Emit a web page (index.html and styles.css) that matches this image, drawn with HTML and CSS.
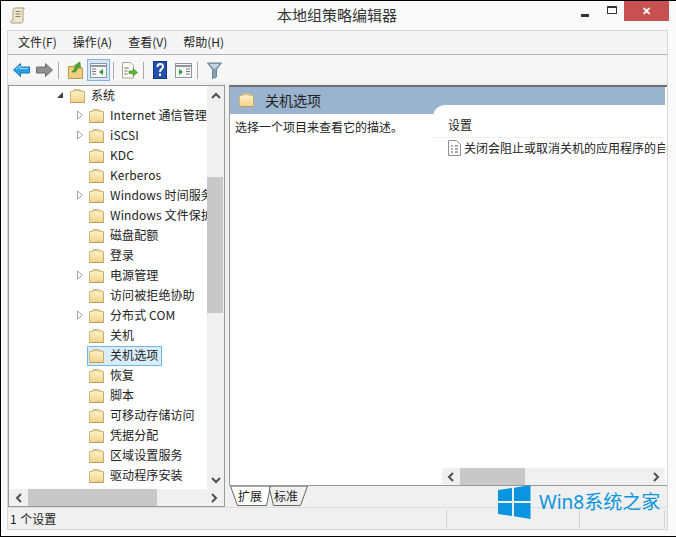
FILE: index.html
```html
<!DOCTYPE html>
<html lang="zh-CN">
<head>
<meta charset="utf-8">
<title>本地组策略编辑器</title>
<link rel="stylesheet" href="styles.css">
</head>
<body>
<svg class="defs" width="0" height="0" aria-hidden="true">
  <defs>
    <linearGradient id="fg" x1="0" y1="0" x2="0" y2="1"><stop offset="0" stop-color="#fff5cc"/><stop offset="1" stop-color="#f0d28a"/></linearGradient>
    <symbol id="folder" viewBox="0 0 15 15">
      <path d="M4 1.500h6l1 1.500h2.500v1h-9.500z" fill="#e8e2cc" stroke="#cbbd95"/>
      <path d="M.5 3.500h3.500l1-1.500 1 0.500 7.500 1 1 0.500v10.500H.5z" fill="url(#fg)" stroke="#d3b875"/>
      <path d="M.5 14.500h14" stroke="#b99d5c"/>
      <path d="M14.500 3.500v11" stroke="#c6ab68"/>
    </symbol>
    <symbol id="closed" viewBox="0 0 8 10"><path d="M1.500 1l5 4-5 4z" fill="#fff" stroke="#a6a6a6"/></symbol>
  </defs>
</svg>
<div class="window">
  <header class="titlebar">
    <svg class="appicon" width="16" height="17" viewBox="0 0 16 17"><path d="M3 3.500C3 1.500 5 1 6 1h8.500c-1 1-1.500 2-1.500 3v9c0 2-1 3-3 3H2c-1 0-1.500-1-1.500-1.500L3 13z" fill="#efe8cf" stroke="#a89a78"/><path d="M5.500 4.500h5M5.500 7h5M5.500 9.500h5" stroke="#8a8068"/></svg>
    <h1 class="title">本地组策略编辑器</h1>
    <div class="winbtns">
      <span class="wbtn"><i class="min"></i></span>
      <span class="wbtn"><i class="max"></i></span>
      <span class="wclose">✕</span>
    </div>
  </header>
  <div class="frame">
    <nav class="menu"><span>文件(F)</span><span>操作(A)</span><span>查看(V)</span><span>帮助(H)</span></nav>
    <div class="toolbar">
      <svg class="tool-first" width="17" height="14" viewBox="0 0 17 14"><path d="M.5 7L7.500.5v3.500h9v6h-9v3.500z" fill="#2b9ee6" stroke="#1b76b8"/><path d="M3 6.500L7 3v2.500h8" stroke="#9fdcff" fill="none"/></svg>
      <svg class="tool-fwd" width="17" height="14" viewBox="0 0 17 14"><path d="M16.500 7L9.500.5v3.500h-9v6h9v3.500z" fill="#8f8f8f" stroke="#6c6c6c"/></svg>
      <i class="sep sep-a"></i>
      <svg class="tool-up" width="15" height="18" viewBox="0 0 15 18"><path d="M.5 5.500h5l1 1.500h8v10.500H.5z" fill="#edcf80" stroke="#b99a50"/><path d="M4 11l4-5-2-1 6-4 .5 6-2-1-3 5z" fill="#52a82e" stroke="#35801c" stroke-width=".6"/></svg>
      <span class="tool-on"><svg width="17" height="15" viewBox="0 0 17 15"><rect x=".5" y=".5" width="16" height="14" fill="#f7f7f7" stroke="#8f989f"/><path d="M.5 3h16" stroke="#8f989f" stroke-width="2"/><path d="M2 6h4M2 8.500h4M2 11h4" stroke="#778"/><path d="M13 6v6l-4-3z" fill="#2a9a3a"/></svg></span>
      <i class="sep sep-b"></i>
      <svg class="tool-exp" width="17" height="17" viewBox="0 0 17 17"><path d="M1.500.5h8l3 3v12.500h-11z" fill="#fbfbf2" stroke="#a8a898"/><path d="M3.500 6h4M3.500 9h3M3.500 12h3" stroke="#666"/><path d="M8 9h4V6.500L16.500 10.500 12 14v-2.500H8z" fill="#59b534" stroke="#3c8e22" stroke-width=".6"/></svg>
      <i class="sep sep-a"></i>
      <svg class="tool-help" width="14" height="18" viewBox="0 0 14 18"><rect x=".5" y=".5" width="13" height="17" fill="#2450b0" stroke="#16327a"/><path d="M4.500 6c0-4 5.500-4 5.500-.5 0 2.500-3 2.500-3 5.500" fill="none" stroke="#fff" stroke-width="2"/><rect x="6" y="12.500" width="2" height="2.500" fill="#fff"/></svg>
      <svg class="tool-view" width="17" height="15" viewBox="0 0 17 15"><rect x=".5" y=".5" width="16" height="14" fill="#f7f7f7" stroke="#8f989f"/><path d="M.5 3h16" stroke="#8f989f" stroke-width="2"/><path d="M11 6h4M11 8.500h4M11 11h4" stroke="#778"/><path d="M4 6v6l4-3z" fill="#2a9a3a"/></svg>
      <i class="sep sep-a"></i>
      <svg class="tool-filter" width="15" height="17" viewBox="0 0 15 17"><path d="M.5 1h14L9.500 7.500v7.500l-4 1.500V7.500z" fill="#86a0b2" stroke="#68859a"/><path d="M2.500 2h10L8.500 6.500h-2z" fill="#c4d5e0"/></svg>
    </div>
    <main class="main">
      <section class="treepane">
        <div class="tree-row-wrap">
          <ul class="tree">
            <li class="node top"><svg class="arrow" width="8" height="10" viewBox="0 0 8 10"><path d="M7 2v6H1z" fill="#404040"/></svg><svg class="fold" width="15" height="15"><use href="#folder"/></svg><span>系统</span></li>
            <li class="node"><svg class="arrow" width="8" height="10"><use href="#closed"/></svg><svg class="fold" width="15" height="15"><use href="#folder"/></svg><span>Internet 通信管理</span></li>
            <li class="node"><svg class="arrow" width="8" height="10"><use href="#closed"/></svg><svg class="fold" width="15" height="15"><use href="#folder"/></svg><span>iSCSI</span></li>
            <li class="node leaf"><svg class="fold" width="15" height="15"><use href="#folder"/></svg><span>KDC</span></li>
            <li class="node leaf"><svg class="fold" width="15" height="15"><use href="#folder"/></svg><span>Kerberos</span></li>
            <li class="node"><svg class="arrow" width="8" height="10"><use href="#closed"/></svg><svg class="fold" width="15" height="15"><use href="#folder"/></svg><span>Windows 时间服务</span></li>
            <li class="node leaf"><svg class="fold" width="15" height="15"><use href="#folder"/></svg><span>Windows 文件保护</span></li>
            <li class="node leaf"><svg class="fold" width="15" height="15"><use href="#folder"/></svg><span>磁盘配额</span></li>
            <li class="node leaf"><svg class="fold" width="15" height="15"><use href="#folder"/></svg><span>登录</span></li>
            <li class="node"><svg class="arrow" width="8" height="10"><use href="#closed"/></svg><svg class="fold" width="15" height="15"><use href="#folder"/></svg><span>电源管理</span></li>
            <li class="node leaf"><svg class="fold" width="15" height="15"><use href="#folder"/></svg><span>访问被拒绝协助</span></li>
            <li class="node"><svg class="arrow" width="8" height="10"><use href="#closed"/></svg><svg class="fold" width="15" height="15"><use href="#folder"/></svg><span>分布式 COM</span></li>
            <li class="node leaf"><svg class="fold" width="15" height="15"><use href="#folder"/></svg><span>关机</span></li>
            <li class="node leaf sel"><div class="selbox"><svg class="fold" width="15" height="15"><use href="#folder"/></svg><span>关机选项</span></div></li>
            <li class="node leaf"><svg class="fold" width="15" height="15"><use href="#folder"/></svg><span>恢复</span></li>
            <li class="node leaf"><svg class="fold" width="15" height="15"><use href="#folder"/></svg><span>脚本</span></li>
            <li class="node leaf"><svg class="fold" width="15" height="15"><use href="#folder"/></svg><span>可移动存储访问</span></li>
            <li class="node leaf"><svg class="fold" width="15" height="15"><use href="#folder"/></svg><span>凭据分配</span></li>
            <li class="node leaf"><svg class="fold" width="15" height="15"><use href="#folder"/></svg><span>区域设置服务</span></li>
            <li class="node leaf"><svg class="fold" width="15" height="15"><use href="#folder"/></svg><span>驱动程序安装</span></li>
          </ul>
          <div class="vbar">
            <svg class="chev" width="10" height="7" viewBox="0 0 10 7"><path d="M1 6l4-4 4 4" fill="none" stroke="#505050" stroke-width="2"/></svg>
            <div class="vtrack"><div class="vthumb"></div></div>
            <svg class="chev" width="10" height="7" viewBox="0 0 10 7"><path d="M1 1l4 4 4-4" fill="none" stroke="#505050" stroke-width="2"/></svg>
          </div>
        </div>
        <div class="hbar">
          <svg class="chev" width="7" height="10" viewBox="0 0 7 10"><path d="M6 1L2 5l4 4" fill="none" stroke="#505050" stroke-width="2"/></svg>
          <div class="htrack"><div class="hthumb tree-thumb"></div></div>
          <svg class="chev" width="7" height="10" viewBox="0 0 7 10"><path d="M1 1l4 4-4 4" fill="none" stroke="#505050" stroke-width="2"/></svg>
        </div>
      </section>
      <section class="detail">
        <div class="detail-box">
          <div class="desc-col">
            <div class="banner"><svg width="15" height="15"><use href="#folder"/></svg><h2>关机选项</h2></div>
            <p class="desc">选择一个项目来查看它的描述。</p>
          </div>
          <div class="list-col">
            <div class="list-panel">
              <div class="list-head">设置</div>
              <div class="list-body">
                <div class="list-item"><svg width="13" height="16" viewBox="0 0 13 16"><path d="M.5.500h8l4 4v11h-12z" fill="#fff" stroke="#8f8f8f"/><path d="M3 6h2M7 6h3M3 9h2M7 9h3M3 12h2M7 12h3" stroke="#555"/></svg><span>关闭会阻止或取消关机的应用程序的自动终止</span></div>
              </div>
              <div class="hbar list-hbar">
                <svg class="chev" width="7" height="10" viewBox="0 0 7 10"><path d="M6 1L2 5l4 4" fill="none" stroke="#505050" stroke-width="2"/></svg>
                <div class="htrack"><div class="hthumb list-thumb"></div></div>
                <svg class="chev" width="7" height="10" viewBox="0 0 7 10"><path d="M1 1l4 4-4 4" fill="none" stroke="#505050" stroke-width="2"/></svg>
              </div>
            </div>
          </div>
        </div>
        <div class="tabs">
          <svg class="tabshape" width="78" height="21" viewBox="0 0 78 21"><path d="M.5 0l7 19.500h29l4-19.500" fill="#fff" stroke="#666"/><path d="M40.500 0l-1 3 4 16.500h27l7-19.500" fill="#f0f0f0" stroke="#666"/><path d="M.5 0h77" stroke="#555"/></svg>
          <span class="tab t1">扩展</span><span class="tab t2">标准</span>
        </div>
      </section>
    </main>
    <footer class="status">
      <span class="s1">1 个设置</span><span class="s2"></span><span class="s3"></span>
    </footer>
  </div>
  <div class="brand">
    <svg width="33" height="34" viewBox="0 0 33 34"><path d="M0 5l14-2v13H0zM16 2.700L32.500 0v16H16zM0 18h14v13L0 29zM16 18h16.500v16L16 31.300z" fill="#0b95e0"/></svg>
    <span>Win8系统之家</span>
  </div>
</div>
</body>
</html>
```
FILE: styles.css
```css
* { box-sizing: border-box; }
html, body { margin: 0; padding: 0; }
body { width: 676px; height: 537px; overflow: hidden; background: #000;
  font: 12px/20px "Noto Sans CJK SC", "Noto Sans", sans-serif; color: #222; }
.defs { display: block; height: 0; }
ul, h1, h2, p { margin: 0; padding: 0; font-weight: 400; }
.window { position: relative; width: 675px; height: 535px; margin-top: 1px; margin-left: 1px; background: #fafafa; display: flex; flex-direction: column; padding: 0 8px 6px 6px; }
.titlebar { height: 29px; flex: none; display: flex; align-items: center; position: relative; margin: 0 -8px 0 -6px; padding: 0 7px 0 9px; }
.appicon { flex: none; margin-top: -1px; }
.title { position: absolute; left: -3px; right: 0; top: 3px; text-align: center; font-size: 15px; line-height: 22px; color: #333; }
.winbtns { margin-left: auto; display: flex; align-self: flex-start; position: relative; }
.wbtn { width: 27px; height: 20px; display: flex; align-items: center; justify-content: center; }
.min { display: block; width: 8px; height: 3px; background: #333; margin-top: 8px; }
.max { display: block; width: 10px; height: 8px; border: 1px solid #333; border-top-width: 2px; margin-top: -2px; }
.wclose { width: 45px; height: 20px; background: #c75050; color: #fff; text-align: center; font-size: 11px; line-height: 19px; font-weight: 700; margin-left: -1px; }
.frame { flex: 1; min-height: 0; display: flex; flex-direction: column; background: #f0f0f0; border: 1px solid #d6d6d6; border-bottom: 0; }
.menu { height: 24px; flex: none; background: #f5f5f5; border-bottom: 1px solid #b4b4b4; display: flex; gap: 16px; padding-left: 10px; line-height: 22px; color: #222; }
.menu span { white-space: nowrap; }
.toolbar { height: 30px; flex: none; display: flex; align-items: center; background: linear-gradient(#f7f7f7 0 24px, #ececec); padding-left: 5px; }
.tool-fwd { margin-left: 6px; }
.sep { display: block; width: 1px; height: 17px; background: #a8a8a8; }
.sep-a { margin-left: 5px; }
.sep-b { margin-left: 3px; }
.tool-up { margin-left: 9px; }
.tool-on { width: 23px; height: 22px; margin-left: 4px; background: #d5e7f8; border: 1px solid #7fb2e5; display: flex; align-items: center; justify-content: center; }
.tool-exp { margin-left: 7px; }
.tool-help { margin-left: 9px; }
.tool-view { margin-left: 8px; }
.tool-filter { margin-left: 9px; }
.main { flex: 1; min-height: 0; display: flex; gap: 4px; background: #f0f0f0; }
.treepane { width: 217px; flex: none; border: 1px solid #9a9a9a; background: #fff; display: flex; flex-direction: column; }
.tree-row-wrap { flex: 1; min-height: 0; display: flex; }
.tree { flex: 1; min-width: 0; list-style: none; overflow: hidden; margin-top: -1px; }
.node { height: 20px; display: flex; align-items: center; padding-left: 67px; white-space: nowrap; color: #222; letter-spacing: .1px; }
.node .arrow { margin-right: 5px; flex: none; }
.node.leaf { padding-left: 80px; }
.node .fold { flex: none; margin-right: 6px; }
.node.top { padding-left: 47px; }
.node.top .arrow { margin-right: 6px; }
.node span { padding: 0 1px; margin-left: -1px; height: 20px; }
.node.sel { padding-left: 78px; }
.selbox { display: flex; align-items: center; height: 20px; padding: 0 2px 0 1px; margin-top: 1px; background: #d9ecfa; border: 1px solid #6fb6e6; }
.selbox span { line-height: 17px; height: 18px; margin-top: -1px; }
.vbar { width: 17px; flex: none; background: #f0f0f0; display: flex; flex-direction: column; align-items: center; padding: 6px 0 5px; }
.vtrack { flex: 1; width: 100%; padding: 78px 1px 0 0; }
.vthumb { height: 136px; background: #c8c8c8; }
.hbar { height: 17px; flex: none; background: #f0f0f0; display: flex; align-items: center; padding: 0 6px; }
.htrack { flex: 1; height: 100%; }
.hthumb { height: 100%; background: #c8c8c8; }
.tree-thumb { width: 129px; margin-left: 6px; }
.detail { flex: 1; min-width: 0; display: flex; flex-direction: column; }
.detail-box { flex: 1; min-height: 0; display: flex; border: 1px solid #9a9a9a; border-top: 2px solid #6f6f6f; border-right: 0; background: #fff; }
.desc-col { width: 203px; flex: none; }
.banner { height: 27px; background: #9ab3cf; display: flex; align-items: center; gap: 11px; padding-left: 9px; }
.banner h2 { font-size: 14px; line-height: 24px; color: #222; margin-top: -2px; }
.banner svg { margin-top: -2px; }
.desc { padding: 3px 0 0 5px; line-height: 20px; }
.list-col { flex: 1; min-width: 0; background: linear-gradient(#9ab3cf 0 27px, #fff 27px); padding-top: 18px; display: flex; margin-right: 2px; }
.list-panel { flex: 1; min-width: 0; background: #fff; border-top-left-radius: 12px; display: flex; flex-direction: column; }
.list-head { height: 33px; flex: none; padding: 10px 0 0 15px; border-bottom: 1px solid #efefef; }
.list-body { flex: 1; min-height: 0; padding: 0 0 0 15px; overflow: hidden; }
.list-item { display: flex; align-items: center; gap: 3px; white-space: nowrap; }
.list-item svg { flex: none; }
.list-hbar { margin-left: 9px; padding: 0 5px; }
.list-thumb { width: 65px; margin-left: 6px; }
.tabs { height: 21px; flex: none; position: relative; background: #f0f0f0; margin-left: 1px; }
.tabshape { position: absolute; left: 0; top: 0; }
.tab { position: absolute; top: 0; font-size: 12px; }
.t1 { left: 8px; }
.t2 { left: 44px; }
.status { height: 23px; flex: none; display: flex; background: #f0f0f0; border-top: 1px solid #dcdcdc; border-bottom: 1px solid #d4d4d4; padding-left: 2px; }
.status span { display: block; border-right: 1px solid #d4d4d4; margin: 2px 0 1px; line-height: 18px; }
.s1 { width: 437px; word-spacing: 1px; }
.s2 { width: 133px; }
.s3 { width: 85px; }
.brand { position: absolute; left: 497px; top: 484px; display: flex; align-items: center; gap: 8px; color: #0b95e0; font: 19px/34px "Noto Sans", "Noto Sans CJK SC", sans-serif; white-space: nowrap; }
```
